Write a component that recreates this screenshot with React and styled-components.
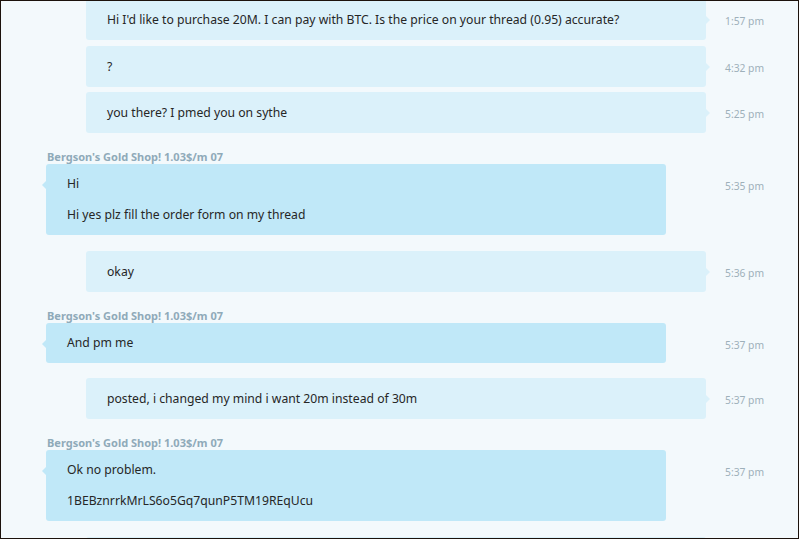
import React from 'react'
import styled, { createGlobalStyle } from 'styled-components'

const GlobalStyle = createGlobalStyle`
  html, body {
    margin: 0;
    padding: 0;
    background: #f3f9fc;
  }
  * {
    box-sizing: border-box;
  }
`

const SHOP = "Bergson's Gold Shop! 1.03$/m 07"

const thread = [
  { id: 1, mine: true, time: '1:57 pm', lines: ["Hi I'd like to purchase 20M. I can pay with BTC. Is the price on your thread (0.95) accurate?"] },
  { id: 2, mine: true, time: '4:32 pm', lines: ['?'] },
  { id: 3, mine: true, time: '5:25 pm', lines: ['you there? I pmed you on sythe'] },
  { id: 4, mine: false, time: '5:35 pm', lines: ['Hi', 'Hi yes plz fill the order form on my thread'] },
  { id: 5, mine: true, time: '5:36 pm', lines: ['okay'] },
  { id: 6, mine: false, time: '5:37 pm', lines: ['And pm me'] },
  { id: 7, mine: true, time: '5:37 pm', lines: ['posted, i changed my mind i want 20m instead of 30m'] },
  { id: 8, mine: false, time: '5:37 pm', lines: ['Ok no problem.', '1BEBznrrkMrLS6o5Gq7qunP5TM19REqUcu'] },
  { id: 9, mine: true, time: '5:38 pm', lines: ['thanks'] },
]

const App = () => {
  return (
    <>
      <GlobalStyle />
      <Wrapper>
        <Thread>
          {thread.map((msg, i) => {
            const prev = thread[i - 1]
            const newGroup = prev && prev.mine !== msg.mine
            return (
              <Message key={msg.id} $newGroup={newGroup} $mine={msg.mine}>
                {!msg.mine && <Sender>{SHOP}</Sender>}
                <Row>
                  <BubbleCol>
                    <Bubble $mine={msg.mine}>
                      {msg.lines.map((line, j) => (
                        <Line key={j}>{line}</Line>
                      ))}
                    </Bubble>
                  </BubbleCol>
                  <Time>{msg.time}</Time>
                </Row>
              </Message>
            )
          })}
        </Thread>
      </Wrapper>
    </>
  )
}

const Wrapper = styled.div`
  width: 799px;
  height: 539px;
  overflow: hidden;
  border: 1px solid #1c120c;
  background: #f3f9fc;
  font-family: 'Noto Sans', 'Open Sans', sans-serif;
`

const Thread = styled.div`
  display: flex;
  flex-direction: column;
  margin-top: -2px;
  padding-left: 45px;
`

const Message = styled.div`
  display: flex;
  flex-direction: column;
  margin-top: ${(p) => (p.$newGroup ? (p.$mine ? '15.5px' : '16px') : '5.5px')};
  &:first-child {
    margin-top: 0;
  }
`

const Sender = styled.div`
  height: 15px;
  padding-left: 1px;
  font-size: 11px;
  line-height: 15px;
  font-weight: 700;
  color: #8faab9;
`

const Row = styled.div`
  display: flex;
  align-items: flex-start;
`

const BubbleCol = styled.div`
  width: 660px;
  display: flex;
`

const Bubble = styled.div`
  position: relative;
  width: 620px;
  margin-left: ${(p) => (p.$mine ? '40px' : '0')};
  padding: ${(p) => (p.$mine ? '11px 21px 10px' : '10px 21px')};
  border-radius: 3px;
  background: ${(p) => (p.$mine ? '#dbf1fa' : '#c0e8f8')};
  color: #262626;
  font-size: 12.2px;
  line-height: 20px;
  display: flex;
  flex-direction: column;
  gap: 11px;

  &::after {
    content: '';
    position: absolute;
    top: 17px;
    ${(p) => (p.$mine ? 'right: -4px;' : 'left: -4px;')}
    border-top: 4px solid transparent;
    border-bottom: 4px solid transparent;
    ${(p) =>
      p.$mine
        ? 'border-left: 4px solid #dbf1fa;'
        : 'border-right: 4px solid #c0e8f8;'}
  }
`

const Line = styled.div`
  white-space: nowrap;
`

const Time = styled.div`
  margin-left: 19px;
  margin-top: 15px;
  font-size: 10.3px;
  line-height: 14px;
  color: #9eb0ba;
`

export default App
